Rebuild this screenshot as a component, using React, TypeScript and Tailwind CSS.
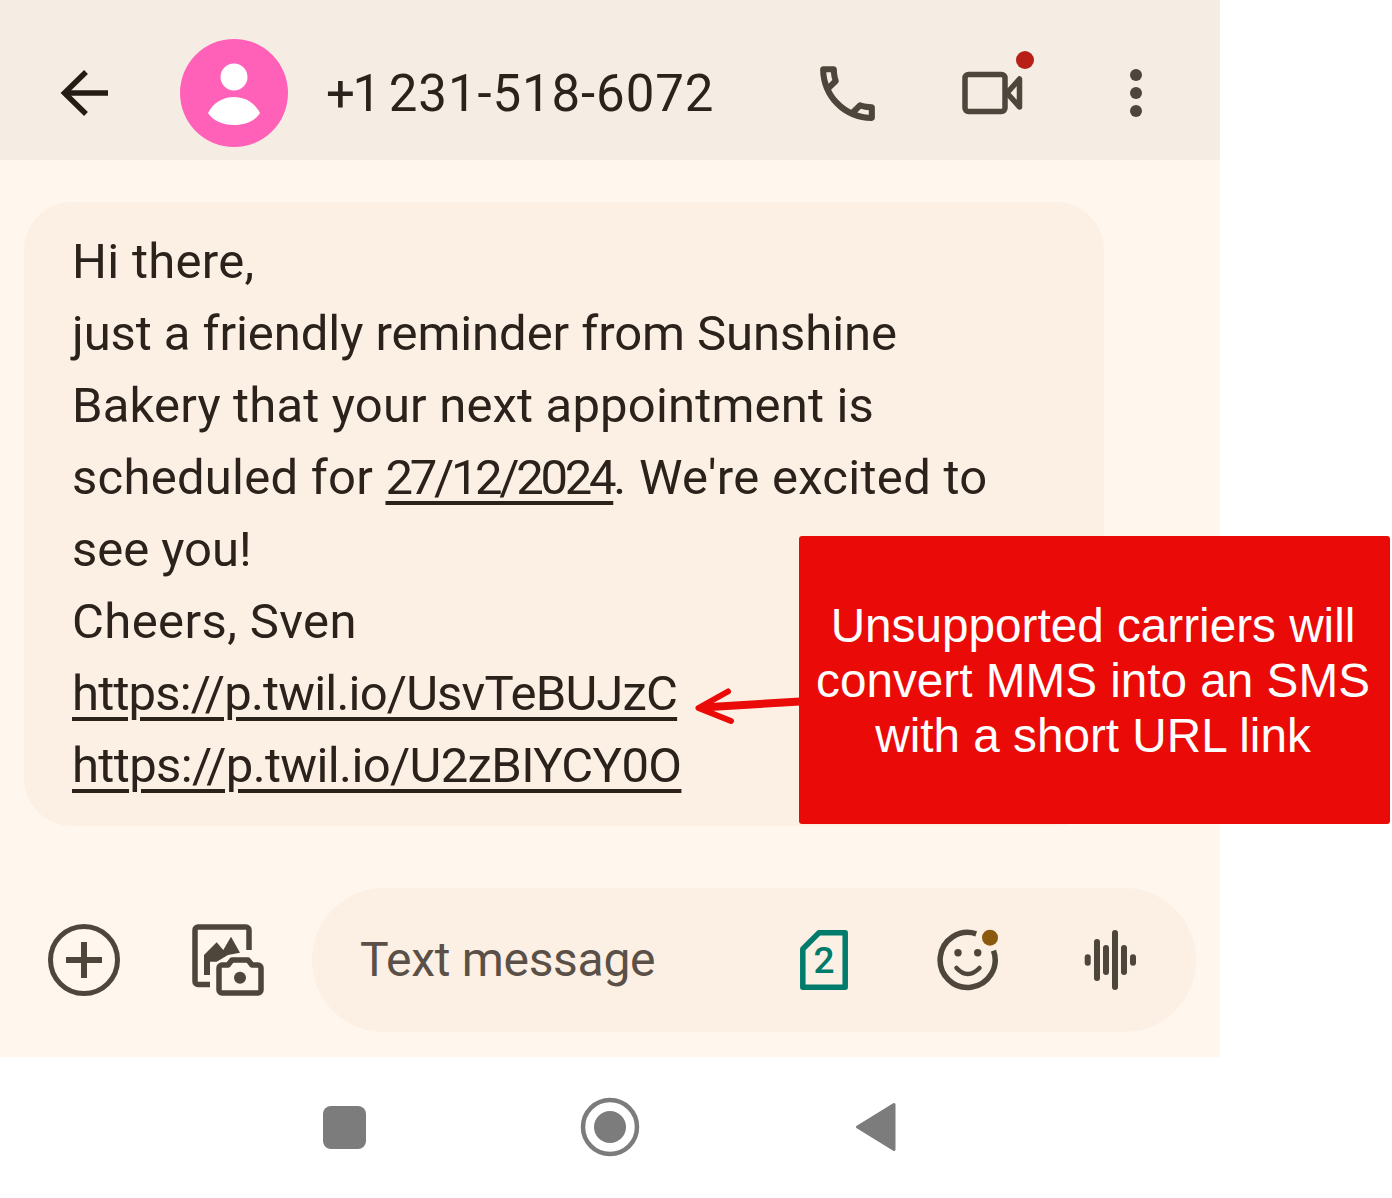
const ICON = '#4e453b'

function BackArrow() {
  return (
    <svg className="h-[50px] w-[50px] shrink-0" viewBox="60 68 50 50" fill="none" stroke="#241c15" strokeWidth="5.5">
      <path d="M108 93H65" />
      <path d="M86 72L64.5 93L86 114" />
    </svg>
  )
}

function Avatar() {
  return (
    <svg className="ml-[70px] h-[108px] w-[108px] shrink-0" viewBox="180 39 108 108">
      <circle cx="234" cy="93" r="54" fill="#ff61b8" />
      <circle cx="234" cy="77" r="13.5" fill="#fff" />
      <path d="M208 113C213 103 223 97 234 97C245 97 255 103 260 113C255 121 245 125 234 125C223 125 213 121 208 113Z" fill="#fff" />
    </svg>
  )
}

function PhoneIcon() {
  return (
    <svg className="h-[73px] w-[73px] shrink-0" viewBox="0 0 24 24" fill={ICON}>
      <path d="M6.54 5c.06.89.21 1.76.45 2.59l-1.2 1.2c-.41-1.2-.67-2.47-.76-3.79h1.51m9.86 12.02c.85.24 1.72.39 2.6.45v1.49c-1.32-.09-2.59-.35-3.8-.75l1.2-1.19M7.5 3H4c-.55 0-1 .45-1 1 0 9.39 7.61 17 17 17 .55 0 1-.45 1-1v-3.49c0-.55-.45-1-1-1-1.24 0-2.45-.2-3.57-.57-.1-.04-.21-.05-.31-.05-.26 0-.51.1-.71.29l-2.2 2.2c-2.83-1.45-5.15-3.76-6.59-6.59l2.2-2.2c.28-.28.36-.67.25-1.02C8.7 6.45 8.5 5.25 8.5 4c0-.55-.45-1-1-1z" />
    </svg>
  )
}

function VideoIcon() {
  return (
    <svg className="ml-[76px] h-[86px] w-[76px] shrink-0" viewBox="960 50 76 86" fill="none" stroke={ICON} strokeWidth="5.5" strokeLinejoin="round">
      <rect x="965" y="74.5" width="40" height="37" rx="3.5" />
      <path d="M1007 93L1019.5 79V107Z" />
      <circle cx="1025" cy="60" r="9" fill="#b81f17" stroke="none" />
    </svg>
  )
}

function MoreIcon() {
  return (
    <svg className="ml-[94px] h-[48px] w-[12px] shrink-0" viewBox="1130 69 12 48" fill={ICON}>
      <circle cx="1136" cy="75" r="6" />
      <circle cx="1136" cy="93" r="6" />
      <circle cx="1136" cy="111" r="6" />
    </svg>
  )
}

function AddIcon() {
  return (
    <svg className="h-[74px] w-[74px] shrink-0" viewBox="47 923 74 74" fill="none" stroke={ICON}>
      <circle cx="84" cy="960" r="33.5" strokeWidth="5" />
      <path d="M84 942V978M66 960H102" strokeWidth="6" />
    </svg>
  )
}

function GalleryIcon() {
  return (
    <svg className="ml-[70px] h-[74px] w-[74px] shrink-0" viewBox="191 923 74 74" fill="none" stroke={ICON} strokeWidth="5.5">
      <path d="M210 984.5H198a3 3 0 0 1-3-3V930a3 3 0 0 1 3-3H246a3 3 0 0 1 3 3V950" />
      <path d="M204 975V955L216.7 942.3L223.3 950L231 936.7L240 952.7L228 955L216.7 961.7H210V975Z" fill={ICON} stroke="none" />
      <path d="M219 968a3 3 0 0 1 3-3H228L232 960H248L252 965H258a3 3 0 0 1 3 3V990a3 3 0 0 1-3 3H222a3 3 0 0 1-3-3Z" strokeLinejoin="round" />
      <circle cx="240" cy="977.7" r="6" fill={ICON} stroke="none" />
    </svg>
  )
}

function SimIcon() {
  return (
    <svg className="h-[60px] w-[48px] shrink-0" viewBox="800 930 48 60" fill="none" stroke="#007b6c" strokeWidth="5.5" strokeLinejoin="round">
      <path d="M802.8 949L819 932.8H845.2V987.2H802.8Z" />
    </svg>
  )
}

function EmojiIcon() {
  return (
    <svg className="ml-[88px] h-[64px] w-[64px] shrink-0" viewBox="936 928 64 64" fill="none" stroke={ICON}>
      <path d="M993.5 950.6A27.5 27.5 0 1 1 976.2 933.8" strokeWidth="5.5" />
      <circle cx="958" cy="952.7" r="3.7" fill={ICON} stroke="none" />
      <circle cx="977.7" cy="952.7" r="3.7" fill={ICON} stroke="none" />
      <path d="M956.5 968Q967.7 980 979.5 968" strokeWidth="4.5" strokeLinecap="round" />
      <circle cx="990" cy="937.7" r="8" fill="#8b5a0f" stroke="none" />
    </svg>
  )
}

function WaveIcon() {
  const bars = [
    { x: 1087.7, top: 954.3, bottom: 965.7 },
    { x: 1097, top: 939, bottom: 981 },
    { x: 1106, top: 945, bottom: 975 },
    { x: 1115, top: 930, bottom: 990 },
    { x: 1124, top: 945, bottom: 975 },
    { x: 1133, top: 954.3, bottom: 965.7 },
  ]
  return (
    <svg className="ml-[84px] h-[60px] w-[52px] shrink-0" viewBox="1084 930 52 60" fill={ICON}>
      {bars.map((b) => (
        <rect key={b.x} x={b.x - 3} y={b.top} width="6" height={b.bottom - b.top} rx="3" />
      ))}
    </svg>
  )
}

function NavBar() {
  return (
    <div className="flex h-[140px] w-[1220px] items-center pl-[323px]">
      <div className="h-[43px] w-[43px] rounded-[8px] bg-[#7c7c7c]" />
      <svg className="ml-[214px] h-[60px] w-[60px] shrink-0" viewBox="580 1097 60 60">
        <circle cx="610" cy="1127" r="27" fill="none" stroke="#7c7c7c" strokeWidth="4.5" />
        <circle cx="610" cy="1127" r="16" fill="#7c7c7c" />
      </svg>
      <svg className="ml-[215px] h-[50px] w-[42px] shrink-0" viewBox="855 1102 42 50" fill="#7c7c7c" stroke="#7c7c7c" strokeWidth="3" strokeLinejoin="round">
        <path d="M857.5 1127L894 1104.5V1149.5Z" />
      </svg>
    </div>
  )
}

function Callout() {
  return (
    <>
      <div className="absolute left-[799px] top-[536px] flex h-[288px] w-[591px] items-center justify-center rounded-[3px] bg-[#ea0a08] pr-[3px] text-center font-['Liberation_Sans',sans-serif] text-[47.7px] leading-[55px] text-white">
        <div>
          Unsupported carriers will
          <br />
          convert MMS into an SMS
          <br />
          with a short URL link
        </div>
      </div>
      <svg className="absolute left-[690px] top-[684px] h-[44px] w-[112px]" viewBox="690 684 112 44" fill="none" stroke="#ea0a08" strokeLinecap="round" strokeLinejoin="round">
        <path d="M800 701.5L702 707.5" strokeWidth="8" strokeLinecap="butt" />
        <path d="M728 691.5L698.5 708L731 721" strokeWidth="6" />
      </svg>
    </>
  )
}

export default function App() {
  return (
    <div className="relative h-[1198px] w-[1392px] bg-white font-['Roboto',sans-serif] font-[370] text-[#2a221b]">
      <header className="flex h-40 w-[1220px] items-center bg-[#f5ece3] pl-[60px] pt-[26px]">
        <BackArrow />
        <Avatar />
        <div className="ml-[38px] w-[485px] shrink-0 text-[51px] leading-none">
          <span className="tracking-[-2.5px]">+1 </span>
          <span className="tracking-[0.9px]">231-518-6072</span>
        </div>
        <PhoneIcon />
        <VideoIcon />
        <MoreIcon />
      </header>

      <main className="h-[897px] w-[1220px] bg-[#fff6ed] pt-[42px]">
        <div className="ml-6 w-[1080px] rounded-[48px] bg-[#fcefe4] pb-6 pl-[48px] pt-6 text-[49px] leading-[72px]">
          <span className="tracking-[0.29px]">Hi there,</span>
          <br />
          <span className="tracking-[-0.07px]">just a friendly reminder from Sunshine</span>
          <br />
          <span className="tracking-[0.17px]">Bakery that your next appointment is</span>
          <br />
          <span className="tracking-[0.25px]">scheduled for </span>
          <span className="tracking-[-3.3px] underline decoration-[4px] underline-offset-[7px]">27/12/2024</span>
          <span className="tracking-[0.3px]">. We're excited to</span>
          <br />
          <span className="tracking-[-0.03px]">see you!</span>
          <br />
          <span className="tracking-[0.4px]">Cheers, Sven</span>
          <br />
          <span className="tracking-[-0.82px] underline decoration-[4px] underline-offset-[7px]">https://p.twil.io/UsvTeBUJzC</span>
          <br />
          <span className="tracking-[-0.63px] underline decoration-[4px] underline-offset-[7px]">https://p.twil.io/U2zBIYCY0O</span>
        </div>

        <div className="mt-[62px] flex items-center pl-[47px]">
          <AddIcon />
          <GalleryIcon />
          <div className="ml-[47px] flex h-36 w-[884px] items-center rounded-full bg-[#fcefe4] pl-[48px]">
            <div className="w-[440px] shrink-0 text-[48px] leading-none tracking-[-0.3px] text-[#5a5047]">Text message</div>
            <div className="relative shrink-0">
              <SimIcon />
              <span className="absolute inset-0 flex items-center justify-center text-[37px] font-medium leading-none text-[#007b6c]">2</span>
            </div>
            <EmojiIcon />
            <WaveIcon />
          </div>
        </div>
      </main>

      <NavBar />
      <Callout />
    </div>
  )
}
